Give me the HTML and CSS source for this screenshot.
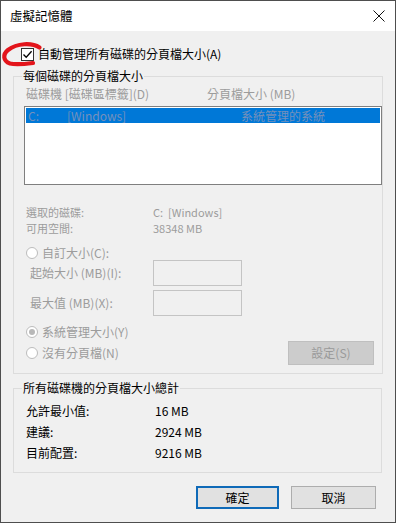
FILE: index.html
```html
<!DOCTYPE html>
<html lang="zh-Hant">
<head>
<meta charset="utf-8">
<title>虛擬記憶體</title>
<link rel="stylesheet" href="styles.css">
</head>
<body>
<div class="window">
  <div class="titlebar">
    <span class="title">虛擬記憶體</span>
    <svg class="close" width="12" height="12" viewBox="0 0 12 12"><path d="M0.5 0.5 L11.5 11.5 M11.5 0.5 L0.5 11.5" stroke="#111" stroke-width="1" fill="none"/></svg>
  </div>
  <div class="content">
    <div class="check-row">
      <span class="checkbox"><svg width="11" height="11" viewBox="0 0 11 11"><path d="M1.5 5.5 L4.2 8.3 L9.6 2.2" stroke="#000" stroke-width="1.3" fill="none"/></svg></span>
      <span class="label">自動管理所有磁碟的分頁檔大小(A)</span>
    </div>

    <fieldset class="group group-drive">
      <legend>每個磁碟的分頁檔大小</legend>
      <div class="list-head disabled">
        <span class="col1">磁碟機 [磁碟區標籤](D)</span>
        <span class="col2">分頁檔大小 (MB)</span>
      </div>
      <div class="listbox">
        <div class="list-row selected">
          <span class="c-drive">C:</span>
          <span class="c-label">[Windows]</span>
          <span class="c-size">系統管理的系統</span>
        </div>
      </div>
      <div class="info disabled">
        <div class="info-row"><span class="info-key">選取的磁碟:</span><span>C:&nbsp; [Windows]</span></div>
        <div class="info-row"><span class="info-key">可用空間:</span><span>38348 MB</span></div>
      </div>
      <div class="radio-row first disabled"><span class="radio"></span><span>自訂大小(C):</span></div>
      <div class="field-row disabled"><span class="field-label">起始大小 (MB)(I):</span><span class="textbox"></span></div>
      <div class="field-row second disabled"><span class="field-label">最大值 (MB)(X):</span><span class="textbox"></span></div>
      <div class="radio-row sys disabled"><span class="radio checked"></span><span>系統管理大小(Y)</span></div>
      <div class="last-row disabled">
        <span class="radio"></span><span>沒有分頁檔(N)</span>
        <span class="btn btn-set">設定(S)</span>
      </div>
    </fieldset>

    <fieldset class="group group-total">
      <legend>所有磁碟機的分頁檔大小總計</legend>
      <div class="total-row"><span class="total-key">允許最小值:</span><span>16 MB</span></div>
      <div class="total-row"><span class="total-key">建議:</span><span>2924 MB</span></div>
      <div class="total-row"><span class="total-key">目前配置:</span><span>9216 MB</span></div>
    </fieldset>

    <div class="actions">
      <span class="btn btn-ok">確定</span>
      <span class="btn btn-cancel">取消</span>
    </div>
  </div>
  <svg class="mark" width="48" height="30" viewBox="0 0 48 30"><path d="M38.5 6.5 C31 1.5 16 2 7 9 C1.5 13.5 2 20 9 22.5 C15 24 24 23 32 22" stroke="#e3141b" stroke-width="4.2" fill="none" stroke-linecap="round"/></svg>
</div>
</body>
</html>
```
FILE: styles.css
```css
* { box-sizing: border-box; }
html, body { margin: 0; padding: 0; background: #f0f0f0; }
body { font-family: "Noto Sans CJK TC", "Noto Sans", sans-serif; font-size: 12px; color: #000; }

.window {
  position: relative;
  width: 396px;
  height: 523px;
  border: 1px solid #4e4e4e;
  background: #f0f0f0;
  overflow: hidden;
}

.titlebar {
  height: 30px;
  background: #fff;
  display: flex;
  align-items: center;
  padding-left: 9px;
  padding-right: 10px;
}
.title { font-size: 12.5px; line-height: 16px; flex: 1; }
.close { display: block; }

.content { padding: 0 11px 0 12px; }

.check-row {
  margin-top: 16px;
  height: 14px;
  display: flex;
  align-items: center;
  padding-left: 8px;
}
.checkbox {
  width: 13px;
  height: 13px;
  border: 1px solid #333;
  background: #fff;
  display: flex;
  align-items: center;
  justify-content: center;
}
.checkbox svg { display: block; }
.label { margin-left: 4px; line-height: 14px; }

.group {
  margin: 0;
  border: 1px solid #dcdcdc;
  padding: 0 0 8px 7px;
  min-width: 0;
}
.group legend {
  padding: 0 1px;
  line-height: 16px;
  margin-left: 1px;
}
.group-drive { margin-top: 7px; width: 370px; }
.group-total { margin-top: 6px; width: 369px; padding-top: 4px; padding-bottom: 9px; }

.disabled { color: #9c9c9c; }

.list-head {
  margin-top: 3px;
  height: 14px;
  line-height: 14px;
  display: flex;
  padding-left: 5px;
}
.list-head .col1 { width: 181px; }

.listbox {
  margin-top: 5px;
  margin-left: 3px;
  width: 358px;
  height: 79px;
  border: 1px solid #7f7f7f;
  background: #fff;
  padding: 1px;
}
.list-row {
  height: 15px;
  line-height: 15px;
  display: flex;
  padding-left: 2px;
}
.list-row.selected { background: #0078d7; color: #7590bb; }
.c-drive { width: 39px; }
.c-label { width: 174px; }

.info { margin-top: 19px; padding-left: 5px; font-size: 11px; }
.info-row { height: 16px; line-height: 16px; display: flex; }
.info-key { width: 127px; }

.radio-row {
  height: 14px;
  display: flex;
  align-items: center;
  padding-left: 5px;
  line-height: 14px;
}
.radio-row.first { margin-top: 10px; }
.radio-row.sys { margin-top: 9px; }
.radio {
  width: 12px;
  height: 12px;
  border: 1px solid #bcbcbc;
  border-radius: 50%;
  background: #fff;
  margin-right: 4px;
  display: flex;
  align-items: center;
  justify-content: center;
  flex: none;
}
.radio.checked::after {
  content: "";
  width: 6px;
  height: 6px;
  border-radius: 50%;
  background: #b8b8b8;
}

.field-row {
  display: flex;
  align-items: center;
  padding-left: 9px;
  height: 26px;
}
.field-row.second { margin-top: 4px; }
.field-label { width: 123px; line-height: 14px; }
.textbox {
  width: 89px;
  height: 26px;
  border: 1px solid #c4c4c4;
  background: #f0f0f0;
}

.last-row {
  margin-top: 2px;
  height: 24px;
  display: flex;
  align-items: center;
  padding-left: 5px;
  line-height: 14px;
}

.btn {
  display: flex;
  align-items: center;
  justify-content: center;
  height: 23px;
  line-height: 14px;
}
.btn-set {
  margin-left: auto;
  margin-right: 8px;
  width: 86px;
  height: 24px;
  background: #cccccc;
  border: 1px solid #bfbfbf;
  color: #9a9a9a;
}

.total-row { height: 21px; display: flex; align-items: center; padding-left: 5px; line-height: 14px; }
.total-key { width: 129px; }

.actions {
  margin-top: 13px;
  display: flex;
  justify-content: flex-end;
  gap: 12px;
  padding-right: 8px;
}
.btn-ok {
  width: 83px;
  background: #e1e1e1;
  border: 2px solid #0f6ab8;
}
.btn-cancel {
  width: 85px;
  background: #e1e1e1;
  border: 1px solid #adadad;
}

.mark { position: absolute; left: 0; top: 40px; }
```
